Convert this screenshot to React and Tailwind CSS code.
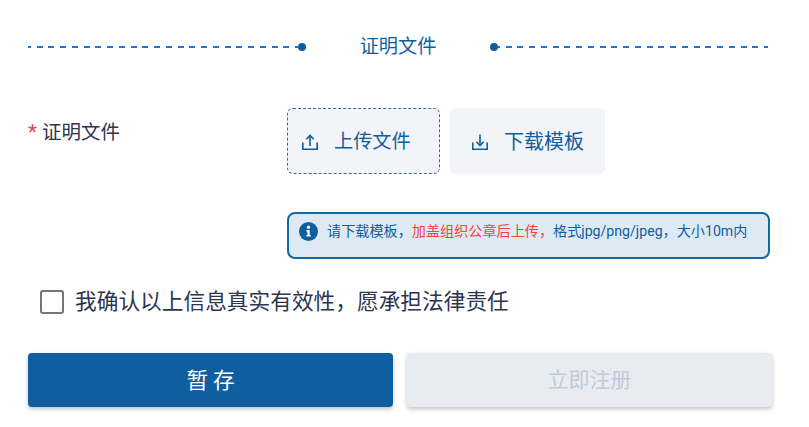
import React from 'react';

const font = { cn: 'font-["Roboto","Noto_Sans_CJK_SC",sans-serif]' };

function UploadIcon() {
    return (
        <svg width="18" height="18" viewBox="0 0 18 18" fill="none" stroke="#0f5ea0" strokeWidth="1.6">
            <path d="M1.8 9.5v6.7h14.4V9.5" />
            <path d="M9 13V2.5" />
            <path d="M5.3 6.2L9 2.5l3.7 3.7" />
        </svg>
    );
}

function DownloadIcon() {
    return (
        <svg width="18" height="18" viewBox="0 0 18 18" fill="none" stroke="#0f5ea0" strokeWidth="1.6">
            <path d="M1.8 9.5v6.7h14.4V9.5" />
            <path d="M9 1.5v11" />
            <path d="M5.3 8.8L9 12.5l3.7-3.7" />
        </svg>
    );
}

function InfoIcon() {
    return (
        <svg width="19" height="19" viewBox="0 0 19 19">
            <circle cx="9.5" cy="9.5" r="9.5" fill="#0f5ea0" />
            <circle cx="9.5" cy="5.2" r="1.6" fill="#fff" />
            <path d="M7.4 8h3.3v5h1v1.6H7.4V13h1v-3.4h-1z" fill="#fff" />
        </svg>
    );
}

export default function App() {
    return (
        <div className={`w-[809px] h-[427px] bg-white overflow-hidden pl-[28px] pr-[37px] pt-[35px] ${font.cn}`}>
            <div className="flex items-center h-[24px] pr-[4px]">
                <div className="h-[2px] flex-1 bg-[repeating-linear-gradient(90deg,#1976d2_-3.05px,#1976d2_2.95px,transparent_2.95px,transparent_8.7px)]" />
                <div className="w-[8px] h-[8px] rounded-full bg-[#0f5ea0]" />
                <div className="w-[184px] text-center text-[19.2px] leading-[24px] text-[#0f5ea0]">证明文件</div>
                <div className="w-[8px] h-[8px] rounded-full bg-[#0f5ea0]" />
                <div className="h-[2px] flex-1 bg-[repeating-linear-gradient(90deg,#1976d2_-4.05px,#1976d2_1.95px,transparent_1.95px,transparent_7.7px)]" />
            </div>

            <div className="flex mt-[49px]">
                <div className="w-[259px] pt-[12px] text-[19.5px] leading-[26px] text-[#2c3550]">
                    <span className="text-[#ef4444] text-[21px] leading-[20px]">*</span> 证明文件
                </div>
                <div className="flex gap-[10px]">
                    <button className="flex items-center w-[153px] h-[66px] pl-[13px] pt-[2px] bg-[#f3f4f8] rounded-[6px] border border-dashed border-[#3d6a96]">
                        <UploadIcon />
                        <span className="ml-[15px] text-[19.2px] text-[#0f5ea0]">上传文件</span>
                    </button>
                    <button className="flex items-center w-[155px] h-[66px] pl-[21px] pt-[2px] bg-[#f3f4f8] rounded-[6px]">
                        <DownloadIcon />
                        <span className="ml-[15px] text-[20px] text-[#0f5ea0]">下载模板</span>
                    </button>
                </div>
            </div>

            <div className="flex mt-[38px] ml-[259px]">
                <div className="flex items-center w-[483px] h-[47px] pl-[10px] pb-[8px] bg-[#deeaf3] border-2 border-[#0f6ba3] rounded-[8px] text-[14.13px] text-[#0f5ea0]">
                    <InfoIcon />
                    <span className="ml-[9px]">
                        请下载模板，<span className="text-[#f44336]">加盖组织公章后上传，</span>格式jpg/png/jpeg，大小10m内
                    </span>
                </div>
            </div>

            <div className="flex items-center mt-[29px] ml-[12px]">
                <div className="w-[24px] h-[24px] rounded-[3px] border-2 border-[#757575]" />
                <span className="ml-[11px] text-[21.7px] leading-[28px] text-[#2c3550]">我确认以上信息真实有效性，愿承担法律责任</span>
            </div>

            <div className="flex gap-[14px] mt-[37px] w-[744px]">
                <button className="w-[365px] h-[54px] pt-[2px] pl-[5px] rounded-[4px] bg-[#0f5ea0] text-white text-[21.6px] tracking-[5px] shadow-[0_2px_4px_rgba(0,0,0,0.25)]">暂存</button>
                <button className="w-[365px] h-[54px] pt-[2px] rounded-[4px] bg-[#e8ebf0] text-[#c0cbda] text-[21px] shadow-[0_2px_4px_rgba(0,0,0,0.25)]">立即注册</button>
            </div>
        </div>
    );
}
